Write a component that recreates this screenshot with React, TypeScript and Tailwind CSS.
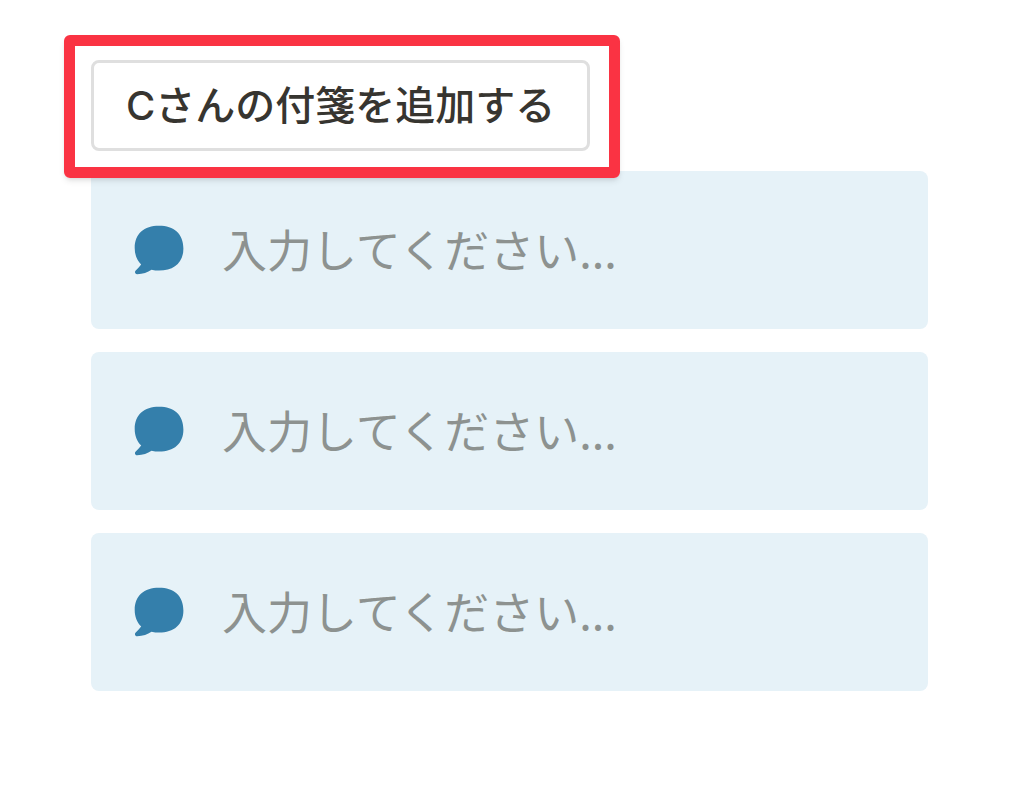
const NOTES = ["note-1", "note-2", "note-3"];

function CommentIcon() {
  return (
    <svg viewBox="0 0 50 50" className="h-[50px] w-[50px] shrink-0 fill-[#347fab]" aria-hidden="true">
      <path d="M25 .8C10 .8 .7 8.800 .7 23c0 6.800 2.300 12.300 6.500 16.600C5.500 41.800 3.500 43.800 1.500 45.700C.3 47 1.200 49.200 3.200 49.200C9 49.200 13.500 47.500 17.500 44.800c2.500.6 5 .8 7.500.8C40 45.600 49.400 37.500 49.400 23.500C49.400 8.800 40 .8 25 .8Z" />
    </svg>
  );
}

function StickyNote({ id }: { id: string }) {
  return (
    <label htmlFor={id} className="flex h-[158px] items-center gap-[38px] rounded-lg bg-[#e6f2f8] px-[43px]">
      <CommentIcon />
      <input
        id={id}
        type="text"
        aria-label="付箋"
        placeholder="入力してください..."
        className="h-[72px] min-w-0 flex-1 bg-transparent pb-1 font-['Noto_Sans_CJK_JP',sans-serif] text-[45px] text-[#373530] outline-none placeholder:text-[#8d9290]"
      />
    </label>
  );
}

export default function App() {
  return (
    <main className="min-h-screen bg-white pt-[60px] pr-24 pb-24 pl-[91px] font-['Inter','Noto_Sans_CJK_JP',sans-serif]">
      <div className="relative mb-5 w-fit">
        <button
          type="button"
          className="h-[91px] rounded-lg border-3 border-[#dfdfdf] bg-white px-8 text-[40px] font-medium whitespace-nowrap text-[#373530]"
        >
          Cさんの付箋を追加する
        </button>
        <div className="pointer-events-none absolute -top-[25px] -right-[30px] -bottom-[27px] -left-[27px] rounded-md border-[11px] border-[#fa3343] shadow-md" />
      </div>

      <div className="flex flex-col gap-[23px]">
        {NOTES.map((id) => (
          <StickyNote key={id} id={id} />
        ))}
      </div>
    </main>
  );
}
